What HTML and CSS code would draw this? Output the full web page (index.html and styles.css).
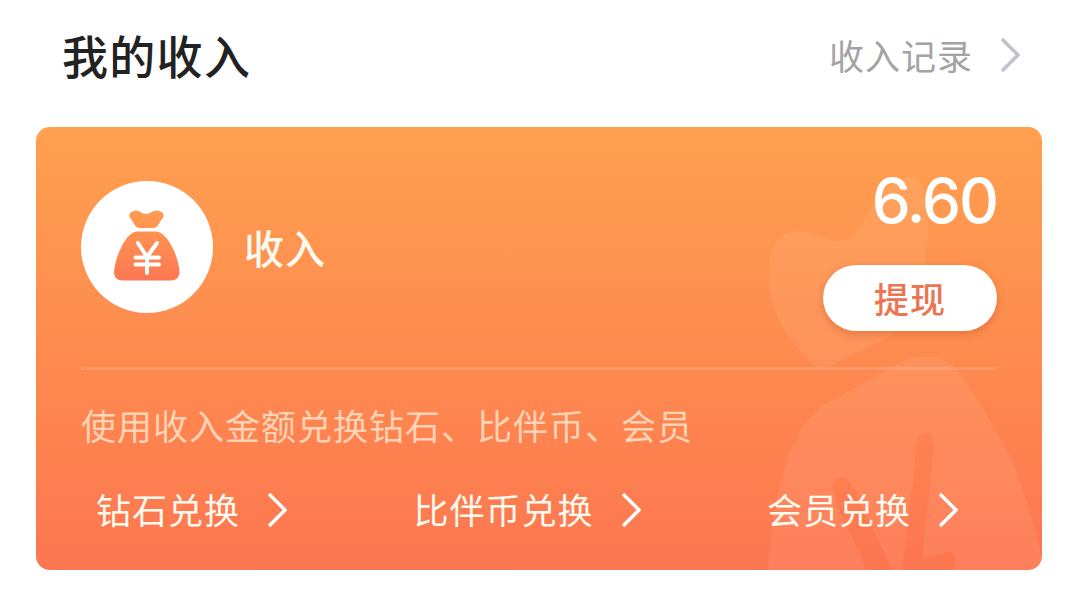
FILE: index.html
```html
<!DOCTYPE html>
<html lang="zh-CN">
<head>
	<meta charset="UTF-8">
	<title>我的收入</title>
	<link rel="stylesheet" href="styles.css">
</head>
<body>
	<div class="head">
		<h2>我的收入</h2>
		<a class="record"><span>收入记录</span><svg class="arrow" viewBox="0 0 20 36"><path d="M2 2L18 18L2 34"/></svg></a>
	</div>
	<div class="card">
		<!-- 背景钱袋 -->
		<svg class="card-bg" viewBox="0 0 300 443">
			<path d="M27 146C27 122 36 103 56 104C74 105 84 114 98 114C114 113 122 96 131 76C142 57 160 48 174 50C182 52 184 72 186 96C187 110 184 124 182 136C178 176 162 202 145 211L88 239C82 242 76 242 71 237C62 228 46 211 38 196C30 178 26 162 27 146Z"/>
			<path d="M26 443C28 420 31 393 35 374C41 336 55 298 78 281C86 275 129 253 145 243C160 234 168 230 180 230C197 229 207 233 217 246C231 264 260 312 271 336C282 362 293 400 300 430V443H213V430C212 425 208 424 204 425L180 433L192 320C193 302 175 302 174 318C173 352 164 400 160 443H151L110 359C105 345 89 350 91 361C94 385 116 420 125 443Z"/>
		</svg>
		<div class="top">
			<div class="icon">
				<svg viewBox="0 0 132 132">
					<defs>
						<linearGradient id="bag" x1="0" y1="29" x2="0" y2="99" gradientUnits="userSpaceOnUse">
							<stop offset="0" stop-color="#ff9d50"/>
							<stop offset="1" stop-color="#fd7853"/>
						</linearGradient>
					</defs>
					<path fill="url(#bag)" d="M53 30C58 28 60 33 65 33C70 33 73 28 78 30C83 31 84 35 81 38C78 42 77 47 72 47H59C54 47 53 42 50 38C47 35 48 31 53 30Z"/>
					<path fill="url(#bag)" d="M56 50.5H75C86 50.5 98 76 98.500 91C98.500 96 95 99.500 90 99.500H42C36 99.500 33 96 33 91C34 76 45 50.500 56 50.500Z"/>
					<path class="yen" d="M57 62L66 76L76 62M54.500 76.500H78M54.500 83.500H78M66 76V92"/>
				</svg>
			</div>
			<div class="name">收入</div>
			<div class="money">
				<div class="num">6.60</div>
				<button>提现</button>
			</div>
		</div>
		<p class="tip">使用收入金额兑换钻石、比伴币、会员</p>
		<div class="links">
			<a><span>钻石兑换</span><svg class="arrow" viewBox="0 0 20 36"><path d="M2 2L18 18L2 34"/></svg></a>
			<a><span>比伴币兑换</span><svg class="arrow" viewBox="0 0 20 36"><path d="M2 2L18 18L2 34"/></svg></a>
			<a><span>会员兑换</span><svg class="arrow" viewBox="0 0 20 36"><path d="M2 2L18 18L2 34"/></svg></a>
		</div>
	</div>
</body>
</html>
```
FILE: styles.css
```css
*{margin:0;padding:0;box-sizing:border-box;}
body{background-color:#fff;font-family:"Noto Sans CJK SC",sans-serif;font-size:35px;letter-spacing:1px;overflow:hidden;}
svg{display:block;}

/*标题*/
.head{height:127px;padding:0 58px 17px 62px;display:flex;justify-content:space-between;align-items:center;}
.head h2{padding-bottom:3px;font-size:46px;font-weight:500;color:#222;letter-spacing:1.3px;}
.record{display:flex;align-items:center;color:#a3a3a3;}
.record span,.links span{padding-bottom:2px;}
.arrow{width:20px;height:36px;margin-left:27px;fill:none;stroke:#fff;stroke-width:3.5;}
.record .arrow{stroke:#bfc2cc;}

/*收入卡片*/
.card{width:1006px;height:443px;margin:0 auto;padding:0 45px;border-radius:14px;position:relative;overflow:hidden;background:linear-gradient(180deg,#ffa04f,#fd7650);color:#fffaf0;}
.card-bg{position:absolute;top:0;right:0;width:300px;height:443px;fill:#fff;fill-opacity:0.07;}
.top{position:relative;display:flex;align-items:center;height:243px;border-bottom:3px solid rgba(255,255,255,0.14);}
.icon{width:132px;height:132px;border-radius:50%;background-color:#fff;}
.yen{fill:none;stroke:#fff;stroke-width:4;stroke-linecap:round;}
.name{margin-left:31px;padding-bottom:1px;font-size:40px;font-weight:500;}
.money{margin-left:auto;display:flex;flex-direction:column;align-items:flex-end;}
.num{padding-top:2px;font-family:Inter,sans-serif;font-size:62px;font-weight:500;line-height:70px;letter-spacing:-2px;color:#fff;}
.money button{width:174px;height:66px;margin-top:29px;border:none;border-radius:33px;background-color:#fff;box-shadow:0 3px 8px rgba(190,80,30,0.4);color:#ee7350;font-family:inherit;font-size:35px;font-weight:500;letter-spacing:1px;}
.tip{position:relative;padding-top:30px;line-height:50px;color:#ffd3b5;}
.links{position:relative;display:flex;justify-content:space-between;padding:34px 39px 0 15px;line-height:50px;}
.links a{display:flex;align-items:center;}
```
